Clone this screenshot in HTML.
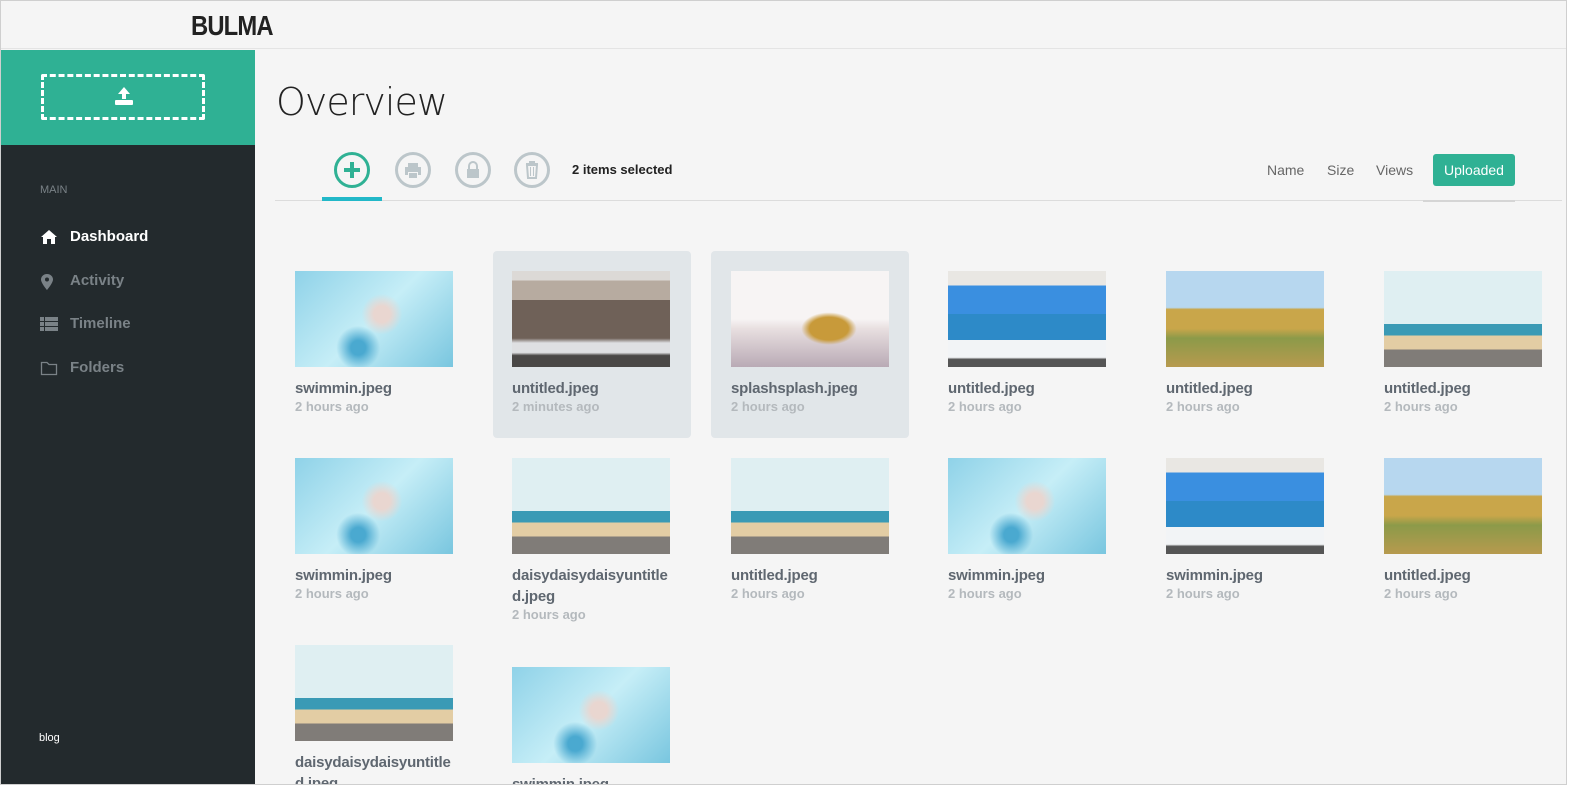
<!DOCTYPE html>
<html style="width:1579px;height:788px;overflow:hidden"><head><meta charset="utf-8"><style>
*{box-sizing:border-box;margin:0;padding:0}
body{width:1579px;height:788px;overflow:hidden;background:#f5f5f5;font-family:"Liberation Sans",sans-serif;position:relative}
.frame{position:absolute;left:0;top:0;width:1567px;height:786px;border:1px solid #cfcfcf;}
.top{position:absolute;left:1px;top:1px;width:1565px;height:48px;background:#f5f5f5;border-bottom:1px solid #e4e4e4}
.logo{position:absolute;left:190px;top:9px;font-size:28px;font-weight:bold;color:#222;letter-spacing:-1px;transform:scaleX(0.85);transform-origin:left}
.side{position:absolute;left:1px;top:50px;width:254px;height:735px;background:#232a2d}
.up{position:absolute;left:0;top:0;width:254px;height:95px;background:#2fb194}
.dash{position:absolute;left:40px;top:24px;width:164px;height:46px;border:3px dashed #fff;border-radius:2px}
.menu{position:absolute;left:39px;color:#7a8287;font-size:15px;font-weight:bold}
.menu svg{position:absolute;left:0;top:1px}
.menu span{position:absolute;left:30px;top:0;white-space:nowrap}
h1{position:absolute;left:276px;top:80px;font-size:38px;color:#222;font-family:"DejaVu Sans","Liberation Sans",sans-serif;font-weight:200;letter-spacing:-1px}
.tb{position:absolute;left:275px;top:200px;width:1287px;height:1px;background:#dcdcdc}
.circ{position:absolute;top:152px;width:36px;height:36px;border:3px solid #bcc6ca;border-radius:50%}
.sort{position:absolute;top:162px;font-size:14px;color:#666}
.card{position:absolute;width:158px}
.card .im{width:158px;height:96px}
.card .n{margin-top:11px;font-size:15px;font-weight:bold;color:#5f6770;line-height:21px;word-break:break-all;letter-spacing:-0.2px}
.card .t{font-size:13px;font-weight:bold;color:#b4b9bd}
.sel{position:absolute;background:#e1e6e9;border-radius:4px;width:198px;height:187px;top:251px}
.swim{background:radial-gradient(circle at 55% 45%,#e9d6d0 0 8%,transparent 20%),radial-gradient(circle at 40% 80%,#4aa9d0 0 6%,transparent 18%),linear-gradient(135deg,#8fd2e8,#c6eef7 50%,#79c6df)}
.lib{background:linear-gradient(180deg,#dcd9d6 0 10%,#b7aba0 10% 30%,#6f6158 30% 70%,#dfe0e2 75% 85%,#4a4846 88%)}
.pine{background:radial-gradient(ellipse at 62% 60%,#c89a3a 0 14%,transparent 20%),linear-gradient(180deg,#f7f4f4 0 50%,#e8dfe0 60%,#b9aab5 100%)}
.boat{background:linear-gradient(180deg,#e9e7e3 0 15%,#3a8fe0 15% 45%,#2d8ac8 45% 72%,#f2f4f6 72% 90%,#555 92%)}
.field{background:linear-gradient(180deg,#b7d7ef 0 38%,#c9a64a 40% 60%,#8c9a49 70%,#b79a4e 100%)}
.skate{background:linear-gradient(180deg,#dfeff2 0 55%,#3a9ab5 55% 67%,#e3cda4 67% 82%,#807c78 82%)}
</style></head><body>
<div class="frame"></div>
<div class="top"><div class="logo">BULMA</div></div>
<div class="side">
 <div class="up"><div class="dash"></div>
  <svg style="position:absolute;left:112px;top:36px" width="22" height="20" viewBox="0 0 22 20"><path d="M11 1 L5 8 H9 V13 H13 V8 H17 Z" fill="#fff"/><rect x="2" y="14" width="18" height="5" rx="1" fill="#fff"/></svg>
 </div>
 <div style="position:absolute;left:39px;top:134px;font-size:11px;color:#7a8287">MAIN</div>
 <div class="menu" style="top:178px;color:#fff"><svg width="18" height="16" viewBox="0 0 18 16"><path d="M9 1 L1 8 H3 V15 H7 V10 H11 V15 H15 V8 H17 Z" fill="#fff"/></svg><span>Dashboard</span></div>
 <div class="menu" style="top:222px"><svg width="14" height="18" viewBox="0 0 14 18"><path d="M7 1 C3 1 1 4 1 6.5 C1 10 7 17 7 17 C7 17 13 10 13 6.5 C13 4 11 1 7 1Z M7 4.5 A2 2 0 1 1 7 8.5 A2 2 0 1 1 7 4.5Z" fill="#7a8287" fill-rule="evenodd"/></svg><span>Activity</span></div>
 <div class="menu" style="top:265px"><svg width="18" height="16" viewBox="0 0 18 16"><g fill="#7a8287"><rect x="0" y="1" width="4" height="4"/><rect x="5" y="1" width="13" height="4"/><rect x="0" y="6" width="4" height="4"/><rect x="5" y="6" width="13" height="4"/><rect x="0" y="11" width="4" height="4"/><rect x="5" y="11" width="13" height="4"/></g></svg><span>Timeline</span></div>
 <div class="menu" style="top:309px"><svg width="18" height="16" viewBox="0 0 18 16"><path d="M1.5 2.5 H7 L9 4.5 H16.5 V14.5 H1.5 Z" fill="none" stroke="#7a8287" stroke-width="1.3"/></svg><span>Folders</span></div>
 <div style="position:absolute;left:38px;top:682px;font-size:11px;color:#fff">blog</div>
</div>
<h1>Overview</h1>
<div class="tb"></div>
<div style="position:absolute;left:322px;top:197px;width:60px;height:4px;background:#22b8c8"></div>
<div class="circ" style="left:334px;border-color:#2fb194"><svg width="30" height="30" viewBox="0 0 30 30"><path d="M15 7 V23 M7 15 H23" stroke="#2fb194" stroke-width="4"/></svg></div>
<div class="circ" style="left:395px"><svg width="30" height="30" viewBox="0 0 30 30"><path d="M10 8 H20 V12 H10Z M7 12 H23 V20 H20 V17 H10 V20 H7Z M11 18 H19 V23 H11Z" fill="#bcc6ca"/></svg></div>
<div class="circ" style="left:455px"><svg width="30" height="30" viewBox="0 0 30 30"><path d="M11 14 V11 A4 4 0 0 1 19 11 V14" fill="none" stroke="#bcc6ca" stroke-width="2"/><rect x="9" y="14" width="12" height="9" fill="#bcc6ca"/></svg></div>
<div class="circ" style="left:514px"><svg width="30" height="30" viewBox="0 0 30 30"><path d="M9 9 H21 M13 9 V7 H17 V9 M10 10 H20 L19 23 H11 Z" fill="none" stroke="#bcc6ca" stroke-width="2"/><path d="M13.5 12 V21 M16.5 12 V21" stroke="#bcc6ca"/></svg></div>
<div style="position:absolute;left:572px;top:162px;font-size:13px;font-weight:bold;color:#222">2 items selected</div>
<div class="sort" style="left:1267px">Name</div>
<div class="sort" style="left:1327px">Size</div>
<div class="sort" style="left:1376px">Views</div>
<div style="position:absolute;left:1433px;top:154px;width:82px;height:32px;background:#2fb194;border-radius:3px;color:#fff;font-size:14px;text-align:center;line-height:32px">Uploaded</div>
<div style="position:absolute;left:1423px;top:200px;width:92px;height:2px;background:#d5d5d5"></div>

<div class="sel" style="left:493px"></div>
<div class="sel" style="left:711px"></div>

<div class="card" style="left:295px;top:271px"><div class="im swim"></div><div class="n">swimmin.jpeg</div><div class="t">2 hours ago</div></div>
<div class="card" style="left:512px;top:271px"><div class="im lib"></div><div class="n">untitled.jpeg</div><div class="t">2 minutes ago</div></div>
<div class="card" style="left:731px;top:271px"><div class="im pine"></div><div class="n">splashsplash.jpeg</div><div class="t">2 hours ago</div></div>
<div class="card" style="left:948px;top:271px"><div class="im boat"></div><div class="n">untitled.jpeg</div><div class="t">2 hours ago</div></div>
<div class="card" style="left:1166px;top:271px"><div class="im field"></div><div class="n">untitled.jpeg</div><div class="t">2 hours ago</div></div>
<div class="card" style="left:1384px;top:271px"><div class="im skate"></div><div class="n">untitled.jpeg</div><div class="t">2 hours ago</div></div>

<div class="card" style="left:295px;top:458px"><div class="im swim"></div><div class="n">swimmin.jpeg</div><div class="t">2 hours ago</div></div>
<div class="card" style="left:512px;top:458px"><div class="im skate"></div><div class="n">daisydaisydaisyuntitled.jpeg</div><div class="t">2 hours ago</div></div>
<div class="card" style="left:731px;top:458px"><div class="im skate"></div><div class="n">untitled.jpeg</div><div class="t">2 hours ago</div></div>
<div class="card" style="left:948px;top:458px"><div class="im swim"></div><div class="n">swimmin.jpeg</div><div class="t">2 hours ago</div></div>
<div class="card" style="left:1166px;top:458px"><div class="im boat"></div><div class="n">swimmin.jpeg</div><div class="t">2 hours ago</div></div>
<div class="card" style="left:1384px;top:458px"><div class="im field"></div><div class="n">untitled.jpeg</div><div class="t">2 hours ago</div></div>

<div class="card" style="left:295px;top:645px"><div class="im skate"></div><div class="n">daisydaisydaisyuntitled.jpeg</div><div class="t">2 hours ago</div></div>
<div class="card" style="left:512px;top:667px"><div class="im swim"></div><div class="n">swimmin.jpeg</div><div class="t">2 hours ago</div></div>
<div style="position:absolute;left:0;top:785px;width:1579px;height:20px;background:#fff"></div>
<div style="position:absolute;left:0;top:784px;width:1567px;height:1px;background:#cfcfcf"></div>
<div style="position:absolute;left:1567px;top:0;width:12px;height:788px;background:#fff"></div>
</body></html>
